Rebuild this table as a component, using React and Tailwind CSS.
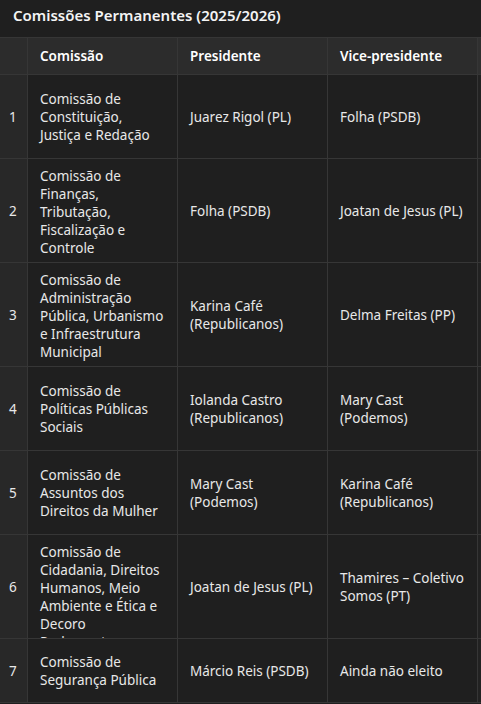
const rows = [
  {
    n: 1,
    comissao: ['Comissão de', 'Constituição,', 'Justiça e Redação'],
    presidente: ['Juarez Rigol (PL)'],
    vice: ['Folha (PSDB)'],
    h: 'h-[84px]',
  },
  {
    n: 2,
    comissao: ['Comissão de', 'Finanças,', 'Tributação,', 'Fiscalização e', 'Controle'],
    presidente: ['Folha (PSDB)'],
    vice: ['Joatan de Jesus (PL)'],
    h: 'h-[104px]',
  },
  {
    n: 3,
    comissao: ['Comissão de', 'Administração', 'Pública, Urbanismo', 'e Infraestrutura', 'Municipal'],
    presidente: ['Karina Café', '(Republicanos)'],
    vice: ['Delma Freitas (PP)'],
    h: 'h-[104px]',
  },
  {
    n: 4,
    comissao: ['Comissão de', 'Políticas Públicas', 'Sociais'],
    presidente: ['Iolanda Castro', '(Republicanos)'],
    vice: ['Mary Cast', '(Podemos)'],
    h: 'h-[84px]',
  },
  {
    n: 5,
    comissao: ['Comissão de', 'Assuntos dos', 'Direitos da Mulher'],
    presidente: ['Mary Cast', '(Podemos)'],
    vice: ['Karina Café', '(Republicanos)'],
    h: 'h-[84px]',
  },
  {
    n: 6,
    comissao: ['Comissão de', 'Cidadania, Direitos', 'Humanos, Meio', 'Ambiente e Ética e', 'Decoro', 'Parlamentar'],
    presidente: ['Joatan de Jesus (PL)'],
    vice: ['Thamires – Coletivo', 'Somos (PT)'],
    h: 'h-[104px]',
  },
  {
    n: 7,
    comissao: ['Comissão de', 'Segurança Pública'],
    presidente: ['Márcio Reis (PSDB)'],
    vice: ['Ainda não eleito'],
    h: 'h-[64px]',
  },
]

function Cell({ lines }) {
  return (
    <div className="flex flex-col overflow-hidden border-r border-[#363636] py-2 pl-3 pr-2">
      <div className="my-auto">
        {lines.map((line, i) => (
          <div key={i} className="whitespace-nowrap">
            {line}
          </div>
        ))}
      </div>
    </div>
  )
}

export default function App() {
  return (
    <div
      className="h-[704px] w-[481px] overflow-hidden bg-[#1f1f1f] text-[#e8e8e8]"
      style={{ fontFamily: '"Noto Sans", "Open Sans", sans-serif' }}
    >
      {/* Title */}
      <div className="flex h-[37px] items-center px-[13px] pb-[6px] text-[15px] font-semibold text-[#f4f4f4]">
        Comissões Permanentes (2025/2026)
      </div>

      {/* Table */}
      <div className="border-t border-[#363636] text-[13.5px] leading-[18px]">
        {/* Header */}
        <div className="grid h-[37px] grid-cols-[28px_150px_150px_150px_3px] border-b border-[#363636] bg-[#2c2c2c] font-semibold text-white">
          <div className="border-r border-[#363636]" />
          <div className="flex items-center border-r border-[#363636] pl-3">Comissão</div>
          <div className="flex items-center border-r border-[#363636] pl-3">Presidente</div>
          <div className="flex items-center border-r border-[#363636] pl-3">Vice-presidente</div>
          <div className="bg-[#303030]" />
        </div>

        {/* Body */}
        {rows.map((row) => (
          <div
            key={row.n}
            className={`grid grid-cols-[28px_150px_150px_150px_3px] overflow-hidden border-b border-[#363636] ${row.h}`}
          >
            <div className="flex items-center border-r border-[#363636] bg-[#282828] pl-[9px]">
              {row.n}
            </div>
            <Cell lines={row.comissao} />
            <Cell lines={row.presidente} />
            <Cell lines={row.vice} />
            <div className="bg-[#222222]" />
          </div>
        ))}
      </div>
    </div>
  )
}
